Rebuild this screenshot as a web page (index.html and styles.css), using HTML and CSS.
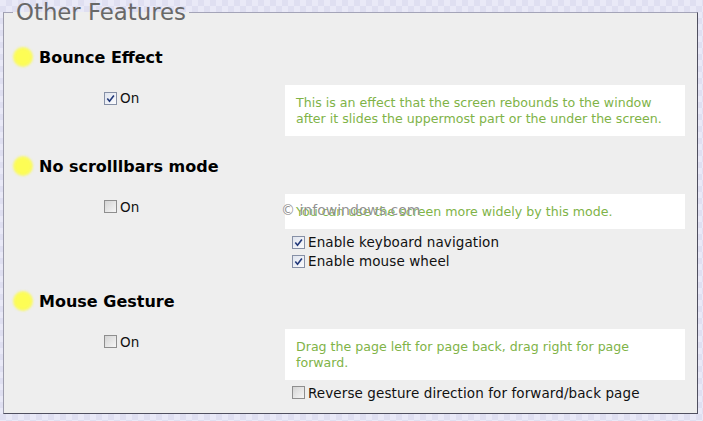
FILE: index.html
```html
<!DOCTYPE html>
<html lang="en">
<head>
<meta charset="utf-8">
<title>Other Features</title>
<link rel="stylesheet" href="styles.css">
</head>
<body>
<fieldset class="features">
  <legend class="features-title">Other Features</legend>

  <section class="feature">
    <h2 class="feature-head"><span class="bullet"></span>Bounce Effect</h2>
    <div class="feature-row">
      <label class="opt main-opt"><span class="cb checked"><svg viewBox="0 0 11 11" width="11" height="11"><path d="M2.3 5.6 L4.5 8.2 L8.9 2.4" /></svg></span>On</label>
      <div class="feature-col">
        <p class="desc">This is an effect that the screen rebounds to the window<br>after it slides the uppermost part or the under the screen.</p>
      </div>
    </div>
  </section>

  <section class="feature">
    <h2 class="feature-head"><span class="bullet"></span>No scrolllbars mode</h2>
    <div class="feature-row">
      <label class="opt main-opt"><span class="cb"></span>On</label>
      <div class="feature-col">
        <p class="desc marked">You can use the screen more widely by this mode.<span class="watermark">© infowindows.com</span></p>
        <div class="sub-opts">
          <label class="opt"><span class="cb checked"><svg viewBox="0 0 11 11" width="11" height="11"><path d="M2.3 5.6 L4.5 8.2 L8.9 2.4" /></svg></span>Enable keyboard navigation</label>
          <label class="opt"><span class="cb checked"><svg viewBox="0 0 11 11" width="11" height="11"><path d="M2.3 5.6 L4.5 8.2 L8.9 2.4" /></svg></span>Enable mouse wheel</label>
        </div>
      </div>
    </div>
  </section>

  <section class="feature">
    <h2 class="feature-head"><span class="bullet"></span>Mouse Gesture</h2>
    <div class="feature-row">
      <label class="opt main-opt"><span class="cb"></span>On</label>
      <div class="feature-col">
        <p class="desc">Drag the page left for page back, drag right for page<br>forward.</p>
        <div class="sub-opts">
          <label class="opt"><span class="cb"></span>Reverse gesture direction for forward/back page</label>
        </div>
      </div>
    </div>
  </section>
</fieldset>
</body>
</html>
```

FILE: styles.css
```css
* {
  box-sizing: border-box;
}

html {
  background-color: #e4e4f4;
  background-image: repeating-conic-gradient(#dfdff1 0 25%, #e9e9f7 0 50%);
  background-size: 12px 12px;
}

body {
  margin: 0;
  height: 421px;
  overflow: hidden;
  font-family: "DejaVu Sans", Verdana, sans-serif;
}

.features {
  margin: 0 5px 0 3px;
  padding: 23px 0 10px;
  min-inline-size: 0;
  border: 1px solid;
  border-color: #a4a4b8 #505060 #505060 #9c9cac;
  background: #eeeeee;
}

.features-title {
  margin-left: 9px;
  padding: 0 3px;
  font-size: 22.8px;
  line-height: 24px;
  color: #686868;
}

.feature + .feature {
  margin-top: 20px;
}

.feature-head {
  display: flex;
  align-items: center;
  gap: 6px;
  margin: 0;
  padding-left: 9px;
  height: 20px;
  font-size: 16px;
  font-weight: bold;
  color: #000;
}

.bullet {
  flex: none;
  width: 20px;
  height: 20px;
  border-radius: 50%;
  background: radial-gradient(circle, #fdfd55 45%, #f7f770 80%, #f0f0a0 100%);
  filter: blur(0.8px);
}

.feature-row {
  display: grid;
  grid-template-columns: 281px 400px;
  align-items: start;
  margin-top: 18px;
}

.opt {
  display: block;
  font-size: 13.5px;
  letter-spacing: 0.1px;
  line-height: 16px;
  color: #111;
  white-space: nowrap;
}

.main-opt {
  margin: 5px 0 0 100px;
}

.cb {
  display: inline-flex;
  align-items: center;
  justify-content: center;
  width: 13px;
  height: 13px;
  margin-right: 3px;
  vertical-align: -1px;
  border: 1px solid #8e8e8e;
  background: linear-gradient(135deg, #d4d4d4, #f6f6f6);
}

.cb.checked {
  border-color: #8690a6;
  background: linear-gradient(135deg, #dfe4ee, #fbfbfd);
}

.cb svg {
  display: block;
}

.cb path {
  fill: none;
  stroke: #22397a;
  stroke-width: 1.6;
}

.desc {
  margin: 0;
  padding: 10px 11px 9px;
  background: #ffffff;
  font-size: 12.6px;
  line-height: 16px;
  color: #80b347;
  white-space: nowrap;
}

.marked {
  position: relative;
}

.watermark {
  position: absolute;
  left: -4px;
  top: 8px;
  font-size: 14px;
  line-height: 16px;
  color: rgba(95, 95, 95, 0.7);
  text-shadow: 0 0 1px rgba(255, 255, 255, 0.9);
}

.sub-opts {
  margin-top: 4px;
  padding-left: 7px;
}

.sub-opts .opt {
  line-height: 19px;
}
```
